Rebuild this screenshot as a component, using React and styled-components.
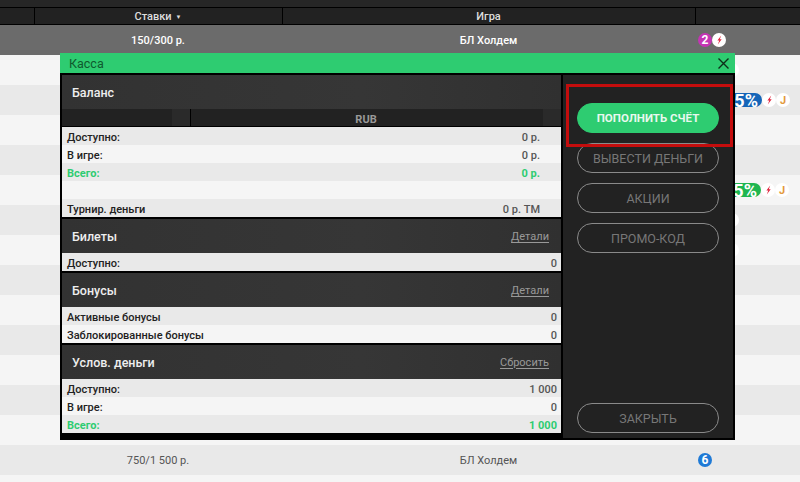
import React from "react";
import styled, { createGlobalStyle } from "styled-components";

const Global = createGlobalStyle`
  html, body { margin: 0; padding: 0; background: #f5f5f5; overflow: hidden; }
  * { box-sizing: border-box; }
  body { font-family: Roboto, "Liberation Sans", sans-serif; }
`;

const Page = styled.div`
  position: relative;
  width: 800px;
  height: 482px;
  overflow: hidden;
`;

const TopStrip = styled.div`
  height: 8px;
  background: #262626;
  border-bottom: 1px solid #000;
`;

const HeadRow = styled.div`
  display: grid;
  grid-template-columns: 35px 248px 413px 1fr;
  height: 17px;
  background: #222;
  border-bottom: 1px solid #000;
`;

const HeadCell = styled.div`
  display: flex;
  align-items: center;
  justify-content: center;
  gap: 4px;
  padding: 1px 1px 0 0;
  border-right: ${(p) => (p.$last ? "0" : "1px solid #000")};
  color: #ddd;
  font-size: 11px;
  font-weight: 500;
  line-height: 16px;
`;

const SortMark = styled.span`
  font-size: 6px;
  line-height: 1;
`;

const Row = styled.div`
  display: grid;
  grid-template-columns: 35px 248px 413px 1fr;
  align-items: center;
  height: 30px;
  background: ${(p) => (p.$active ? "#6b6b6b" : p.$even ? "#e9e9e9" : "#f5f5f5")};
  color: ${(p) => (p.$active ? "#fff" : "#555")};
  font-size: 11px;
  font-weight: ${(p) => (p.$active ? 500 : 400)};
`;

const Cell = styled.div`
  padding-right: 2px;
  text-align: center;
  white-space: nowrap;
`;

const Badges = styled.div`
  display: flex;
  align-items: center;
  padding-left: ${(p) => p.$pad ?? 2}px;
  white-space: nowrap;
`;

const Num = styled.span`
  display: inline-flex;
  align-items: center;
  justify-content: center;
  flex: none;
  width: 14px;
  height: 14px;
  border-radius: 50%;
  background: ${(p) => p.$bg};
  color: #fff;
  font-size: 12px;
  font-weight: 700;
`;

const Round = styled.span`
  display: inline-flex;
  align-items: center;
  justify-content: center;
  flex: none;
  width: 14px;
  height: 14px;
  border-radius: 50%;
  background: #fff;
  color: #e39a3e;
  font-size: 11px;
  font-weight: 700;
`;

const Pill = styled.span`
  display: inline-flex;
  align-items: center;
  justify-content: flex-end;
  flex: none;
  width: ${(p) => p.$w}px;
  height: 14px;
  padding-right: 4px;
  border-radius: 7px;
  background: ${(p) => p.$bg};
  color: #fff;
  font-size: 18px;
  font-weight: 700;
`;

const Modal = styled.div`
  position: absolute;
  left: 60px;
  top: 53px;
  width: 675px;
  height: 387px;
  background: #000;
  display: flex;
  flex-direction: column;
`;

const TitleBar = styled.div`
  display: flex;
  align-items: center;
  justify-content: space-between;
  height: 20px;
  padding: 0 6px 0 9px;
  background: #2ecc71;
  color: #0f5a2e;
  font-size: 12.5px;
`;

const Body = styled.div`
  display: flex;
  gap: 2px;
  padding: 2px;
  flex: 1;
  min-height: 0;
`;

const LeftCol = styled.div`
  width: 499px;
  display: flex;
  flex-direction: column;
  gap: 2px;
`;

const Section = styled.section`
  display: flex;
  flex-direction: column;
`;

const SectionHead = styled.div`
  display: flex;
  align-items: center;
  justify-content: space-between;
  height: 34px;
  padding: 0 12px 0 10px;
  background: linear-gradient(90deg, #323232, #363636 60%, #303030);
  color: #eee;
  font-size: 12.5px;
  font-weight: 500;
`;

const HeadLink = styled.a`
  color: #999;
  font-size: 11px;
  font-weight: 400;
  text-decoration: underline;
  text-underline-offset: 2px;
`;

const Currency = styled.div`
  display: grid;
  grid-template-columns: 110px 19px 1fr 18px;
  height: 18px;
  background: #222;
  border-bottom: 1px solid #000;
`;

const CurrencyBlank = styled.div``;

const Arrow = styled.div`
  background: #2a2a2a;
  border-right: ${(p) => (p.$line ? "1px solid #000" : "0")};
`;

const CurrencyName = styled.div`
  display: flex;
  align-items: center;
  justify-content: center;
  padding: 3px 2px 0 0;
  color: #999;
  font-size: 11px;
  font-weight: 700;
`;

const DataRow = styled.div`
  display: flex;
  align-items: center;
  justify-content: space-between;
  height: 18px;
  padding: 2px ${(p) => (p.$inset ? 21 : 4)}px 0 5px;
  background: ${(p) => (p.$even ? "#f5f5f5" : "#e9e9e9")};
  color: ${(p) => (p.$green ? "#2ecc71" : "#222")};
  font-size: 11px;
  font-weight: ${(p) => (p.$green ? 700 : 500)};
`;

const Value = styled.span`
  color: ${(p) => (p.$green ? "#2ecc71" : "#555")};
`;

const RightCol = styled.div`
  position: relative;
  width: 170px;
  height: 363px;
  background: #222;
  display: flex;
  flex-direction: column;
  align-items: center;
  padding: 28px 0 5px;
  gap: 10px;
`;

const Btn = styled.div`
  display: flex;
  align-items: center;
  justify-content: center;
  flex: none;
  width: 142px;
  height: 30px;
  margin-top: ${(p) => (p.$push ? "auto" : "0")};
  border-radius: 15px;
  border: 1px solid ${(p) => (p.$primary ? "#2ecc71" : "#8a8a8a")};
  background: ${(p) => (p.$primary ? "#2ecc71" : "transparent")};
  color: ${(p) => (p.$primary ? "#e8f8ee" : "#777")};
  font-size: ${(p) => (p.$primary ? 11.5 : 12.5)}px;
  font-weight: ${(p) => (p.$primary ? 700 : 400)};
`;

const Highlight = styled.div`
  position: absolute;
  left: 3px;
  top: 9px;
  width: 167px;
  height: 63px;
  border: 3px solid #c40d0d;
`;

const Bolt = () => (
  <svg width="7" height="10" viewBox="0 0 7 10">
    <path d="M5.2 0.5 1.4 5.6h1.9L1.8 9.5l3.9-5.3H3.8z" fill="#e0233c" />
  </svg>
);

const Close = () => (
  <svg width="11" height="11" viewBox="0 0 11 11">
    <path d="M.5.5l10 10M10.5.5l-10 10" stroke="#0e2e1a" strokeWidth="1.4" fill="none" />
  </svg>
);

const rows = [
  { active: true, stake: "150/300 р.", game: "БЛ Холдем", badges: "active" },
  { badges: "bolt" },
  { badges: "blue" },
  {},
  {},
  { badges: "green" },
  { badges: "bolt" },
  { badges: "bolt" },
  {},
  {},
  {},
  {},
  {},
  {},
  { stake: "750/1 500 р.", game: "БЛ Холдем", badges: "six" },
  {},
];

function RowBadges({ kind }) {
  if (kind === "active")
    return (
      <Badges $pad={2}>
        <Num $bg="#c534b4">2</Num>
        <Round><Bolt /></Round>
      </Badges>
    );
  if (kind === "six")
    return (
      <Badges $pad={2}>
        <Num $bg="#1f7ad6">6</Num>
      </Badges>
    );
  if (kind === "bolt")
    return (
      <Badges $pad={29}>
        <Round><Bolt /></Round>
      </Badges>
    );
  if (kind === "blue")
    return (
      <Badges $pad={5}>
        <Pill $bg="#1565b8" $w={61}>25%</Pill>
        <Round><Bolt /></Round>
        <Round>J</Round>
      </Badges>
    );
  if (kind === "green")
    return (
      <Badges $pad={5}>
        <Pill $bg="#1fb650" $w={60}>25%</Pill>
        <Round><Bolt /></Round>
        <Round>J</Round>
      </Badges>
    );
  return null;
}

export default function App() {
  return (
    <Page>
      <Global />
      <TopStrip />
      <HeadRow>
        <HeadCell />
        <HeadCell>Ставки <SortMark>▼</SortMark></HeadCell>
        <HeadCell>Игра</HeadCell>
        <HeadCell $last />
      </HeadRow>
      {rows.map((r, i) => (
        <Row key={i} $active={r.active} $even={i % 2 === 0}>
          <Cell />
          <Cell>{r.stake}</Cell>
          <Cell>{r.game}</Cell>
          <RowBadges kind={r.badges} />
        </Row>
      ))}
      <Modal>
        <TitleBar>
          Касса
          <Close />
        </TitleBar>
        <Body>
          <LeftCol>
            <Section>
              <SectionHead>Баланс</SectionHead>
              <Currency>
                <CurrencyBlank />
                <Arrow $line />
                <CurrencyName>RUB</CurrencyName>
                <Arrow />
              </Currency>
              <DataRow $inset>Доступно:<Value>0 р.</Value></DataRow>
              <DataRow $inset $even>В игре:<Value>0 р.</Value></DataRow>
              <DataRow $inset $green>Всего:<Value $green>0 р.</Value></DataRow>
              <DataRow $inset $even />
              <DataRow $inset>Турнир. деньги<Value>0 р. TM</Value></DataRow>
            </Section>
            <Section>
              <SectionHead>Билеты<HeadLink>Детали</HeadLink></SectionHead>
              <DataRow>Доступно:<Value>0</Value></DataRow>
            </Section>
            <Section>
              <SectionHead>Бонусы<HeadLink>Детали</HeadLink></SectionHead>
              <DataRow>Активные бонусы<Value>0</Value></DataRow>
              <DataRow $even>Заблокированные бонусы<Value>0</Value></DataRow>
            </Section>
            <Section>
              <SectionHead>Услов. деньги<HeadLink>Сбросить</HeadLink></SectionHead>
              <DataRow>Доступно:<Value>1 000</Value></DataRow>
              <DataRow $even>В игре:<Value>0</Value></DataRow>
              <DataRow $green>Всего:<Value $green>1 000</Value></DataRow>
            </Section>
          </LeftCol>
          <RightCol>
            <Btn $primary>ПОПОЛНИТЬ СЧЁТ</Btn>
            <Btn>ВЫВЕСТИ ДЕНЬГИ</Btn>
            <Btn>АКЦИИ</Btn>
            <Btn>ПРОМО-КОД</Btn>
            <Btn $push>ЗАКРЫТЬ</Btn>
            <Highlight />
          </RightCol>
        </Body>
      </Modal>
    </Page>
  );
}
